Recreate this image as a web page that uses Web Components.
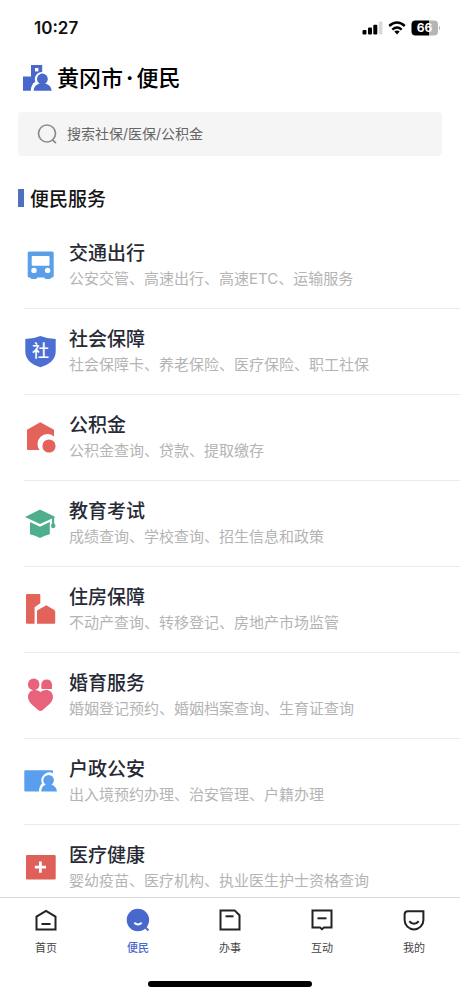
<!DOCTYPE html>
<html lang="zh-CN">
<head>
<meta charset="utf-8">
<meta name="viewport" content="width=device-width, initial-scale=1">
<title>黄冈市·便民</title>
<style>
html, body { margin: 0; height: 100%; }
body { background: #fff; color: #111; font-family: Inter, "Noto Sans CJK SC", sans-serif; }
</style>
</head>
<body>
<city-app></city-app>
<script>
const define = (name, html, setup) => {
  const template = document.createElement('template');
  template.innerHTML = html;
  customElements.define(name, class extends HTMLElement {
    connectedCallback() {
      if (this.shadowRoot) return;
      this.attachShadow({ mode: 'open' }).append(template.content.cloneNode(true));
      if (setup) setup(this, this.shadowRoot);
    }
  });
};

const serviceIcons = {
  bus: `<g fill="#5a9fe8"><rect x="5.7" y="4.4" width="26" height="26" rx="1.5"/><rect x="8.5" y="28" width="6.5" height="4" rx="1.5"/><rect x="22.5" y="28" width="6.5" height="4" rx="1.5"/></g><g fill="#fff"><rect x="9.7" y="9" width="17.8" height="9.8" rx="1"/><circle cx="12" cy="23.4" r="2.7"/><circle cx="25.6" cy="23.4" r="2.7"/></g>`,
  shield: `<path fill="#4b6fd2" d="M18.4 3Q25 5.8 33.7 6V18.5C33.7 26 28 31.5 18.4 34.2C9 31.5 3.3 26 3.3 18.5V6Q12 5.8 18.4 3Z"/><text x="18.4" y="23.5" text-anchor="middle" font-size="17" font-weight="500" fill="#fff">社</text>`,
  fund: `<path fill="#e3625a" d="M18.3 3.3L32 10.8V17.4A10 10 0 0 0 17.5 31H6Q5 31 5 30V10.8Z"/><circle cx="27" cy="27" r="6.6" fill="#e3625a"/>`,
  cap: `<g fill="#4fae8b"><path d="M18 4.6L33.4 12L18 19L3 12Z"/><path d="M8 17L18 21.7L27.8 17V29.2Q23 30.5 18 33Q13 30.5 8 29.2Z"/><path d="M30 12H32.2V18.6Q33.6 19.4 33.4 21.2Q33 23 31.2 23.2Q29.2 23 29 21.2Q28.9 19.4 30 18.6Z"/></g>`,
  housing: `<g fill="#e3625a"><path d="M5 3H17.5Q18.3 3 18.3 4V12.3L12.6 16.3V32.7H5Q4 32.7 4 31.8V4Q4 3 5 3Z"/><path d="M24.3 14.2L32.3 19Q33.2 19.5 33.2 20.5V31.8Q33.2 32.7 32.2 32.7H15V20.5Q15 19.6 15.8 19.1Z"/></g>`,
  heart: `<g fill="#e8627b"><circle cx="11.7" cy="7.4" r="5.8"/><path d="M19.3 7.2A5.4 5.5 0 0 1 30 7.2V12H20.2Q19.3 12 19.3 11Z"/><path d="M18.4 15.2C22 11.3 31 12 31 20C31 25 26 28.5 20.4 33.2Q18.4 34.8 16.4 33.2C11 28.5 6 25 6 20C6 12 15 11.3 18.4 15.2Z"/></g>`,
  police: `<rect x="2.3" y="7.2" width="28.7" height="21.2" rx="1.2" fill="#5a9fee"/><path fill="#fff" d="M31.5 10.6A8 8 0 0 0 20 20.5Q17.2 22.8 16.8 29H36V13Z"/><g fill="#5a9fee"><circle cx="26.6" cy="17.2" r="5.3"/><path d="M19.2 28.4Q19.5 23.2 24 21.5H29.5Q34.5 23.5 35 28.4Z"/></g>`,
  medical: `<rect x="4" y="6" width="29.7" height="24.4" rx="1.2" fill="#df5f59"/><path stroke="#fff" stroke-width="2.8" d="M12.8 18.1H24M18.4 12.5V23.7"/>`
};

const tabIcons = {
  home: `<path d="M2.5 8.6L12 2.8L21.5 8.6V21.4H2.5Z"/><path d="M7.5 16H16.5"/>`,
  service: `<circle cx="11.9" cy="12" r="11.2" fill="currentColor" stroke="none"/><path d="M17.5 17.5L22.5 22.5"/><path d="M8.3 14.8Q12 18.2 15.7 14.8" stroke="#fff"/>`,
  work: `<path d="M2.5 2.4H16.6L21.5 7.2V21.4H2.5Z"/><path d="M7.5 8.3H15.5"/>`,
  chat: `<path d="M2.5 2.4H21.5V19.6H14L12 21.3L10 19.6H2.5Z"/><path d="M7.5 10.3H16.5"/>`,
  mine: `<path d="M6 3.2H21.4V12A9.4 9.4 0 0 1 2.6 12V6.6Q2.6 3.2 6 3.2Z"/><path d="M7.3 13.2Q12 18.2 16.7 13.2"/>`
};

define('status-bar', `
<style>
:host { display: flex; align-items: center; justify-content: space-between; height: 56px; padding: 0 19px 0 34px; box-sizing: border-box; flex: none; }
time { font-size: 17px; line-height: 20px; font-weight: 600; }
div { display: flex; align-items: center; gap: 5px; }
svg { display: block; }
</style>
<time>10:27</time>
<div>
  <svg width="21" height="14" viewBox="0 0 21 14"><rect x="0.5" y="9" width="4" height="4.5" rx="1"/><rect x="6" y="6.6" width="4" height="6.9" rx="1"/><rect x="11.3" y="3.8" width="4" height="9.7" rx="1"/><rect x="16.8" y="0.5" width="3.6" height="13" rx="1" fill="#d8d8d8"/></svg>
  <svg width="18" height="14" viewBox="0 0 18 14" fill="none" stroke="#000" stroke-width="2.4"><path d="M1.2 5Q9 -1.8 16.8 5"/><path d="M4.3 8.6Q9 4.6 13.7 8.6"/><path d="M6.3 10.6Q9 8.6 11.7 10.6L9 13.6Z" fill="#000" stroke="none"/></svg>
  <svg width="30" height="16" viewBox="0 0 30 16" role="img" aria-label="66%"><path d="M4.5 .5H18V15.5H4.5Q.5 15.5 .5 11.5V4.5Q.5 .5 4.5 .5Z"/><path d="M18 .5H23Q27 .5 27 4.5V11.5Q27 15.5 23 15.5H18Z" fill="#b5b5b5"/><path d="M28 5.8Q30.4 8 28 10.2Z" fill="#b5b5b5"/><text x="13.5" y="12.4" text-anchor="middle" font-size="12" font-weight="700" fill="#fff">66</text></svg>
</div>`);

define('city-header', `
<style>
:host { display: flex; align-items: center; gap: 3px; height: 44px; padding: 0 22px; flex: none; }
h1 { margin: 0; font-size: 22px; line-height: 32px; font-weight: 500; color: #000; }
::slotted(b) { margin: 0 3px; }
svg { flex: none; }
</style>
<svg width="32" height="32" viewBox="0 0 32 32" aria-hidden="true"><path fill="#4968cc" d="M9 3H20.2V11.5H9ZM1 14.5H9V8H20.2V28.7H1Z"/><path fill="#fff" d="M13 6H16.4V9.4H13Z"/><path fill="#fff" d="M20.2 10A7.2 7.2 0 0 0 13.3 19.8Q8.8 22.5 8.8 29H31V10Z"/><g fill="#4968cc"><circle cx="20.4" cy="17" r="5.4"/><path d="M11.5 28.7Q12 23.2 17.3 21.4H23.5Q29.2 23.2 29.7 28.7Z"/></g></svg>
<h1><slot></slot></h1>`);

define('search-box', `
<style>
:host { display: block; padding: 12px 18px 0; flex: none; }
label { display: flex; align-items: center; gap: 9px; height: 44px; padding: 0 18px; background: #f5f5f5; border-radius: 4px; }
svg { flex: none; }
input { flex: 1; min-width: 0; border: 0; padding: 0; outline: 0; background: none; font: inherit; font-size: 14px; line-height: 20px; color: #333; }
input::placeholder { color: #666; opacity: 1; }
</style>
<label>
  <svg width="22" height="22" viewBox="0 0 22 22" fill="none" stroke="#8d8d8d" stroke-width="1.7" stroke-linecap="round" aria-hidden="true"><circle cx="11" cy="10.5" r="8.5"/><path d="M16.5 17L19.5 19.7"/></svg>
  <input type="search" aria-label="搜索" placeholder="搜索社保/医保/公积金">
</label>`);

define('section-title', `
<style>
:host { display: flex; align-items: center; gap: 6px; padding: 28px 18px 11px; flex: none; }
i { width: 6px; height: 18px; background: #4f70bd; }
h2 { margin: 0; font: 500 19px/28px "Noto Sans CJK SC", sans-serif; color: #151515; }
</style>
<i></i><h2><slot></slot></h2>`);

define('service-row', `
<style>
:host { display: block; padding-left: 24px; }
a { display: flex; align-items: center; gap: 11px; height: 83px; padding-bottom: 2px; border-bottom: 1px solid #ebebeb; color: inherit; text-decoration: none; }
svg { flex: none; margin-left: -2px; font-family: "Noto Sans CJK SC", sans-serif; }
div { min-width: 0; white-space: nowrap; }
h3 { margin: 0; font: 500 19px/28px "Noto Sans CJK SC", sans-serif; color: #262a35; }
p { margin: 0; font-size: 15px; line-height: 26px; color: #b4b4b4; }
</style>
<a href="#"><svg width="36" height="36" viewBox="0 0 36 36" aria-hidden="true"></svg><div><h3><slot name="title"></slot></h3><p><slot></slot></p></div></a>`,
(host, root) => { root.querySelector('svg').innerHTML = serviceIcons[host.getAttribute('icon')]; });

define('tab-item', `
<style>
:host { display: block; flex: 1; color: #222; }
:host([active]) { color: #4968cc; }
a { display: flex; flex-direction: column; align-items: center; gap: 7px; padding-top: 10px; color: inherit; text-decoration: none; font: 400 11px/16px "Noto Sans CJK SC", sans-serif; }
span { color: #444; }
:host([active]) span { color: #4968cc; font-weight: 500; }
</style>
<a href="#"><svg width="24" height="24" viewBox="0 0 24 24" fill="none" stroke="currentColor" stroke-width="2" aria-hidden="true"></svg><span><slot></slot></span></a>`,
(host, root) => {
  root.querySelector('svg').innerHTML = tabIcons[host.getAttribute('icon')];
  if (host.hasAttribute('active')) root.querySelector('a').setAttribute('aria-current', 'page');
});

define('tab-bar', `
<style>
:host { display: block; flex: none; background: #fff; border-top: 1px solid #d9d9d9; }
nav { display: flex; height: 83px; }
i { display: block; width: 164px; height: 6px; margin: 0 auto 9px; border-radius: 3px; background: #000; }
</style>
<nav><slot></slot></nav><i></i>`);

define('city-app', `
<style>
:host { display: flex; flex-direction: column; height: 100vh; background: #fff; }
main { flex: 1; min-height: 0; overflow-y: auto; scrollbar-width: none; }
</style>
<status-bar></status-bar>
<city-header>黄冈市<b>·</b>便民</city-header>
<search-box></search-box>
<section-title>便民服务</section-title>
<main>
  <service-row icon="bus"><span slot="title">交通出行</span>公安交管、高速出行、高速ETC、运输服务</service-row>
  <service-row icon="shield"><span slot="title">社会保障</span>社会保障卡、养老保险、医疗保险、职工社保</service-row>
  <service-row icon="fund"><span slot="title">公积金</span>公积金查询、贷款、提取缴存</service-row>
  <service-row icon="cap"><span slot="title">教育考试</span>成绩查询、学校查询、招生信息和政策</service-row>
  <service-row icon="housing"><span slot="title">住房保障</span>不动产查询、转移登记、房地产市场监管</service-row>
  <service-row icon="heart"><span slot="title">婚育服务</span>婚姻登记预约、婚姻档案查询、生育证查询</service-row>
  <service-row icon="police"><span slot="title">户政公安</span>出入境预约办理、治安管理、户籍办理</service-row>
  <service-row icon="medical"><span slot="title">医疗健康</span>婴幼疫苗、医疗机构、执业医生护士资格查询</service-row>
</main>
<tab-bar>
  <tab-item icon="home">首页</tab-item>
  <tab-item icon="service" active>便民</tab-item>
  <tab-item icon="work">办事</tab-item>
  <tab-item icon="chat">互动</tab-item>
  <tab-item icon="mine">我的</tab-item>
</tab-bar>`);
</script>
</body>
</html>
